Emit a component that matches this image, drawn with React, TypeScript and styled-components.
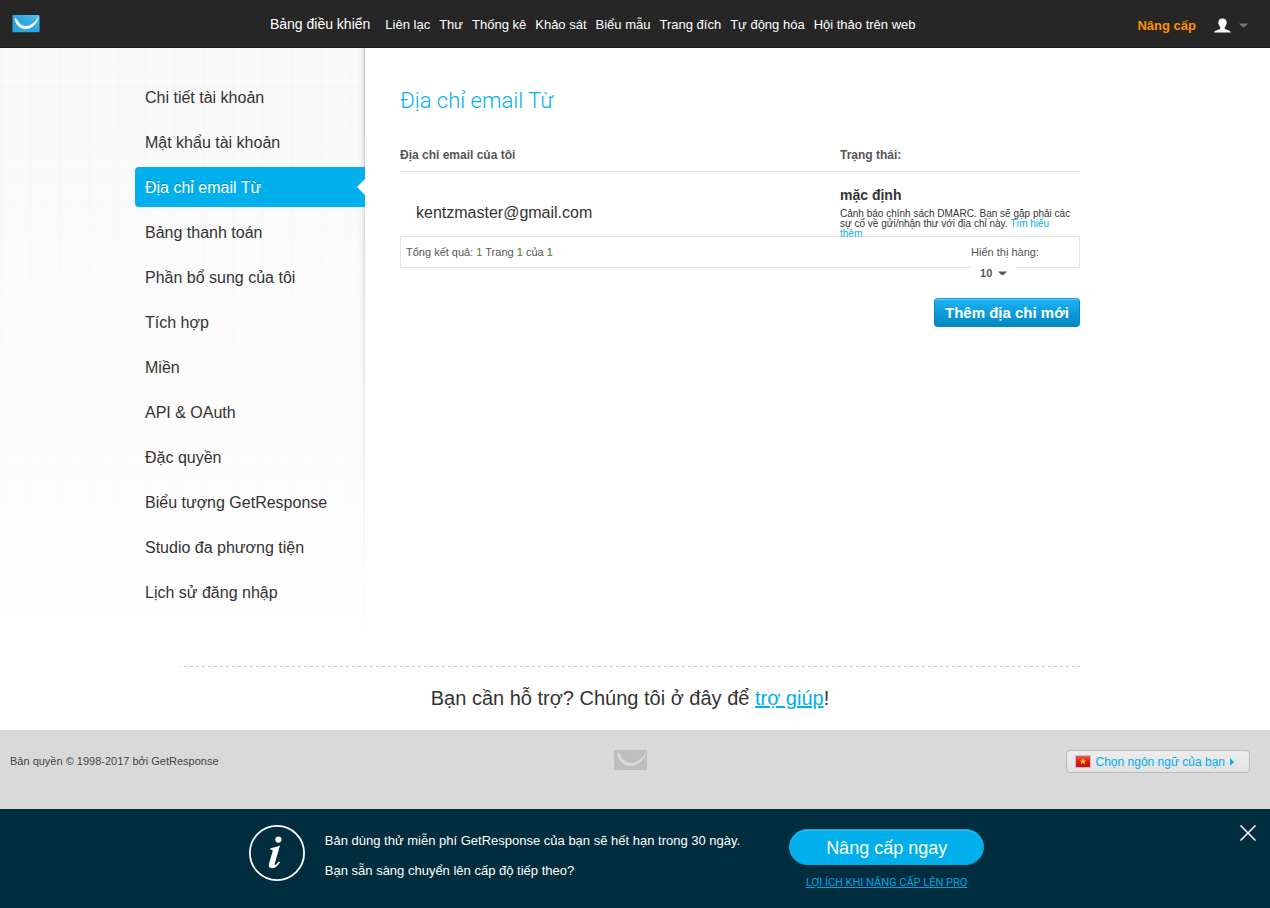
import React from "react";
import styled, { createGlobalStyle } from "styled-components";

const blue = "#00afec";
const sans = `"Liberation Sans", Arial, Helvetica, sans-serif`;
const roboto = `Roboto, "Liberation Sans", sans-serif`;

const GlobalStyle = createGlobalStyle`
  *, *::before, *::after { box-sizing: border-box; }
  body { margin: 0; background: #002e3e; font-family: ${sans}; color: #333; }
  button, select { font-family: inherit; }
  h1, p, ul { margin: 0; padding: 0; }
  ul { list-style: none; }
`;

const Page = styled.div`
  min-height: 100vh;
  display: flex;
  flex-direction: column;
  background: #fff;
`;

const TopBar = styled.header`
  display: flex;
  align-items: center;
  height: 48px;
  padding: 0 22px 0 12px;
  background: #262626;
  border-bottom: 1px solid #1c1c1c;
`;

const LogoLink = styled.a`
  display: block;
  height: 18px;
`;

const MainNav = styled.nav`
  display: flex;
  align-items: baseline;
  gap: 9px;
  margin: 0 auto;
  padding: 2px 0 0 8px;
`;

const NavLink = styled.a<{ $lead?: boolean }>`
  color: #fff;
  font-size: ${(p) => (p.$lead ? 14 : 13)}px;
  line-height: 20px;
  margin-right: ${(p) => (p.$lead ? 6 : 0)}px;
  text-decoration: none;
  white-space: nowrap;
`;

const UpgradeLink = styled.a`
  color: #ff9000;
  font-size: 13px;
  font-weight: bold;
  line-height: 20px;
  padding-top: 4px;
  text-decoration: none;
  white-space: nowrap;
`;

const UserButton = styled.button`
  display: flex;
  align-items: center;
  gap: 8px;
  margin-left: 18px;
  padding: 4px 0 0;
  border: 0;
  background: none;
`;

const Main = styled.main`
  display: grid;
  grid-template-columns: minmax(250px, calc(50% - 270px)) minmax(0, 1fr);
`;

const Sidebar = styled.aside`
  display: flex;
  justify-content: flex-end;
  min-height: 592px;
  padding: 29px 0 20px;
  background:
    linear-gradient(to bottom, rgba(255, 255, 255, 0) 10%, #fff 100%),
    linear-gradient(to left, rgba(0, 0, 0, 0.18), rgba(0, 0, 0, 0.03) 3px, rgba(0, 0, 0, 0) 7px),
    repeating-linear-gradient(90deg, rgba(0, 0, 0, 0.006) 0 3px, transparent 3px 11px, rgba(0, 0, 0, 0.005) 11px 12px, transparent 12px 29px),
    repeating-linear-gradient(0deg, rgba(0, 0, 0, 0.006) 0 2px, transparent 2px 9px, rgba(0, 0, 0, 0.005) 9px 12px, transparent 12px 23px),
    #f9f9f9;
`;

const SideList = styled.ul`
  display: flex;
  flex-direction: column;
  gap: 5px;
  width: 230px;
`;

const SideLink = styled.a<{ $active?: boolean }>`
  display: flex;
  align-items: center;
  justify-content: space-between;
  height: 40px;
  padding-left: 10px;
  border-radius: 4px 0 0 4px;
  background: ${(p) => (p.$active ? blue : "transparent")};
  color: ${(p) => (p.$active ? "#fff" : "#333")};
  text-shadow: ${(p) => (p.$active ? "0 -1px 0 rgba(0, 0, 0, 0.2)" : "none")};
  font-size: 16px;
  line-height: 20px;
  text-decoration: none;
`;

const SideLabel = styled.span`
  padding-top: 2px;
`;

const Content = styled.section`
  width: 715px;
  max-width: 100%;
  padding: 37px 0 0 35px;
`;

const Title = styled.h1`
  color: ${blue};
  font-family: ${roboto};
  font-size: 22px;
  font-weight: 300;
  line-height: 32px;
`;

const EmailTable = styled.table`
  width: 100%;
  margin-top: 22px;
  border-collapse: collapse;
  table-layout: fixed;
`;

const HeadCell = styled.th<{ $width?: string }>`
  width: ${(p) => p.$width ?? "auto"};
  height: 32px;
  padding: 0;
  border-bottom: 1px solid #e2e2e2;
  color: #555;
  font-size: 12px;
  text-align: left;
  vertical-align: top;
  line-height: 32px;
`;

const EmailCell = styled.td`
  height: 64px;
  padding: 18px 0 0 16px;
  font-size: 16px;
`;

const StatusCell = styled.td`
  padding: 13px 0 0;
  vertical-align: top;
`;

const StatusText = styled.div`
  height: 51px;
`;

const StatusName = styled.strong`
  display: block;
  font-size: 14px;
  line-height: 20px;
  margin-bottom: 4px;
`;

const StatusNote = styled.p`
  font-size: 10px;
  line-height: 10px;
`;

const NoteLink = styled.a`
  color: ${blue};
  text-decoration: none;
`;

const Pager = styled.div`
  display: flex;
  justify-content: space-between;
  height: 32px;
  padding: 0 40px 0 5px;
  border: 1px solid #e2e2e2;
  color: #555;
  font-size: 11px;
  line-height: 30px;
`;

const PageNumber = styled.span`
  color: #4a7a2a;
`;

const RowsPicker = styled.div`
  display: flex;
  flex-direction: column;
  align-items: flex-start;
`;

const RowsSelectBox = styled.div`
  display: flex;
  align-items: center;
  height: 20px;
  margin-top: -4px;
  padding: 2px 9px 0;
  background: #fff;
`;

const RowsSelect = styled.select`
  appearance: none;
  width: 18px;
  padding: 0;
  border: 0;
  background: transparent;
  color: #555;
  font-size: 11px;
  font-weight: bold;
  line-height: 16px;
`;

const Actions = styled.div`
  display: flex;
  justify-content: flex-end;
  margin-top: 30px;
`;

const AddButton = styled.button`
  height: 29px;
  padding: 0 10px;
  border: 1px solid #0a86bd;
  border-top-color: #1c9fd8;
  border-radius: 4px;
  background: linear-gradient(to bottom, #1db4f5, #0086c3);
  box-shadow: inset 0 1px 0 rgba(255, 255, 255, 0.3);
  color: #fff;
  font-size: 15px;
  font-weight: bold;
  line-height: 26px;
  white-space: nowrap;
`;

const HelpArea = styled.section`
  display: flex;
  justify-content: center;
  padding: 26px 10px 0 0;
`;

const Help = styled.div`
  width: 900px;
  max-width: 100%;
  height: 64px;
  padding-top: 18px;
  background: repeating-linear-gradient(90deg, #c8c8c8 0 3px, transparent 3px 6px) -2px 0 / 100% 1px repeat-x;
  font-size: 20px;
  line-height: 28px;
  text-align: center;
`;

const HelpLink = styled.a`
  color: ${blue};
`;

const Footer = styled.footer`
  display: grid;
  grid-template-columns: 1fr auto 1fr;
  align-items: start;
  height: 79px;
  padding: 20px 20px 0 10px;
  background:
    repeating-linear-gradient(35deg, rgba(255, 255, 255, 0.03) 0 2px, transparent 2px 5px),
    repeating-linear-gradient(-55deg, rgba(255, 255, 255, 0.03) 0 2px, transparent 2px 5px),
    #d8d8d8;
`;

const Copyright = styled.p`
  font-size: 11px;
  line-height: 22px;
  color: #444;
`;

const LanguageButton = styled.button`
  display: flex;
  align-items: center;
  justify-self: end;
  gap: 5px;
  height: 23px;
  padding: 0 15px 0 8px;
  border: 1px solid #bababa;
  border-radius: 4px;
  background: linear-gradient(to bottom, #ededed, #e2e2e2);
  color: ${blue};
  font-size: 12px;
  white-space: nowrap;
`;

const Banner = styled.section`
  display: flex;
  flex: 1;
  align-items: flex-start;
  min-height: 99px;
  padding: 16px 14px 16px 0;
  background: #002e3e;
  border-bottom: 1px solid #00202c;
`;

const BannerBody = styled.div`
  display: flex;
  align-items: flex-start;
  margin: 0 auto;
  padding-right: 7px;
`;

const BannerText = styled.div`
  margin: 0 49px 0 20px;
  padding-top: 1px;
  color: #fff;
  font-size: 13px;
  line-height: 30px;
`;

const BannerActions = styled.div`
  display: flex;
  flex-direction: column;
  align-items: center;
  gap: 9px;
  padding-top: 4px;
`;

const UpgradeButton = styled.button`
  width: 195px;
  height: 36px;
  padding: 2px 0 0;
  border: 1px solid #13a3dc;
  border-radius: 18px;
  background: ${blue};
  box-shadow: inset 0 1px 0 #33c0f3;
  color: #fff;
  font-size: 18px;
`;

const BenefitsLink = styled.a`
  color: #00a5e8;
  font-family: ${roboto};
  font-size: 11px;
  line-height: 18px;
`;

const CloseButton = styled.button`
  display: flex;
  padding: 0;
  border: 0;
  background: none;
`;

const mainLinks = ["Bảng điều khiển", "Liên lạc", "Thư", "Thống kê", "Khảo sát", "Biểu mẫu", "Trang đích", "Tự động hóa", "Hội thảo trên web"];

const sideLinks = [
  "Chi tiết tài khoản",
  "Mật khẩu tài khoản",
  "Địa chỉ email Từ",
  "Bảng thanh toán",
  "Phần bổ sung của tôi",
  "Tích hợp",
  "Miền",
  "API & OAuth",
  "Đặc quyền",
  "Biểu tượng GetResponse",
  "Studio đa phương tiện",
  "Lịch sử đăng nhập",
];

function EnvelopeLogo() {
  return (
    <svg width="28" height="18" viewBox="0 0 28 18" aria-hidden="true">
      <defs>
        <linearGradient id="envelope" x1="1" y1="0" x2="0" y2="1">
          <stop offset="0" stopColor="#5cc1ee" />
          <stop offset="0.5" stopColor="#2ba6e0" />
          <stop offset="1" stopColor="#2aa5df" />
        </linearGradient>
      </defs>
      <rect x="0.5" width="27" height="17.3" rx="0.8" fill="url(#envelope)" />
      <path d="M2.4 3.8C3.2 2.6 4.2 3 4.8 4.2C7 8.4 10 11 14 11C19.5 11 23.4 7 26.9 1.6C26.9 4.4 22.2 14 14 14.2C8 14.1 4.2 10.4 2.4 3.8Z" fill="#fff" />
    </svg>
  );
}

function FooterEnvelope() {
  return (
    <svg width="33" height="20" viewBox="0 0 33 20" aria-hidden="true">
      <rect width="33" height="20" rx="1" fill="#bebebe" />
      <path d="M3 3.6C3.8 2.6 5 3 5.7 4.2C8.2 9.4 12 12.8 17 12.8C23 12.8 28 8.6 33 1.4C32.4 5 26 16 17 16.1C9.6 16 5 11.4 3 3.6Z" fill="#dadada" />
    </svg>
  );
}

function UserIcon() {
  return (
    <svg width="17" height="15" viewBox="0 0 17 15" aria-hidden="true">
      <path d="M8.5 0.5C11.2 0.5 12.8 2 12.6 4.5C13 4.8 12.8 6.3 12.2 6.6C11.9 8 11.1 8.8 10.7 9.2V10.6C11.7 12 16.4 12.2 16.9 14.6H0.1C0.6 12.2 5.3 12 6.3 10.6V9.2C5.7 8.6 5.1 7.8 4.9 6.6C4.3 6.3 4.1 4.8 4.5 4.5C4.4 2 5.8 0.5 8.5 0.5Z" fill="#fff" />
    </svg>
  );
}

function Caret({ color }: { color: string }) {
  return (
    <svg width="9" height="5" viewBox="0 0 9 5" aria-hidden="true">
      <path d="M0 0.5H9L6 3.5H5.5L4.5 4.5L3.5 3.5H3Z" fill={color} />
    </svg>
  );
}

function Notch() {
  return (
    <svg width="8" height="16" viewBox="0 0 8 16" aria-hidden="true">
      <path d="M8 0V16L0 8Z" fill="#fff" />
    </svg>
  );
}

function VietnamFlag() {
  return (
    <svg width="16" height="13" viewBox="0 0 16 13" aria-hidden="true">
      <defs>
        <linearGradient id="flag" x1="0" y1="0" x2="0" y2="1">
          <stop offset="0" stopColor="#f0574c" />
          <stop offset="0.5" stopColor="#e01a1c" />
          <stop offset="1" stopColor="#c80f14" />
        </linearGradient>
      </defs>
      <rect x="0.5" y="0.5" width="15" height="12" fill="#fff" stroke="#c9c4c4" />
      <rect x="1" y="1" width="14" height="11" fill="url(#flag)" />
      <path d="M8 3L8.9 5.4H11.2L9.4 6.8L10.1 9.2L8 7.8L5.9 9.2L6.6 6.8L4.8 5.4H7.1Z" fill="#ffe600" />
    </svg>
  );
}

function InfoIcon() {
  return (
    <svg width="56" height="56" viewBox="0 0 56 56" aria-hidden="true">
      <circle cx="28" cy="28" r="27.1" fill="none" stroke="#fff" strokeWidth="1.8" />
      <circle cx="29.4" cy="14.6" r="3.1" fill="#fff" />
      <path d="M21.4 23.3C25 22.7 27.8 21.9 31 20.6L25.8 38.4C25.3 40 26.2 40.2 27.2 39.4C28.2 38.5 29 37.5 29.8 36.4L31 37.2C28.9 40.7 26.4 43.2 23.3 43.2C20.3 43.2 19.3 41.4 20 38.8L23.6 26.6C24 25.1 23.6 24.7 21.4 24.7Z" fill="#fff" />
    </svg>
  );
}

export default function App() {
  return (
    <>
      <GlobalStyle />
      <Page>
        <TopBar>
          <LogoLink href="#" aria-label="GetResponse">
            <EnvelopeLogo />
          </LogoLink>
          <MainNav>
            {mainLinks.map((label, i) => (
              <NavLink key={label} href="#" $lead={i === 0}>
                {label}
              </NavLink>
            ))}
          </MainNav>
          <UpgradeLink href="#">Nâng cấp</UpgradeLink>
          <UserButton type="button" aria-label="Tài khoản">
            <UserIcon />
            <Caret color="#777" />
          </UserButton>
        </TopBar>

        <Main>
          <Sidebar>
            <SideList>
              {sideLinks.map((label) => {
                const active = label === "Địa chỉ email Từ";
                return (
                  <li key={label}>
                    <SideLink href="#" $active={active}>
                      <SideLabel>{label}</SideLabel>
                      {active && <Notch />}
                    </SideLink>
                  </li>
                );
              })}
            </SideList>
          </Sidebar>

          <Content>
            <Title>Địa chỉ email Từ</Title>
            <EmailTable>
              <thead>
                <tr>
                  <HeadCell scope="col">Địa chỉ email của tôi</HeadCell>
                  <HeadCell scope="col" $width="240px">Trạng thái:</HeadCell>
                </tr>
              </thead>
              <tbody>
                <tr>
                  <EmailCell>kentzmaster@gmail.com</EmailCell>
                  <StatusCell>
                    <StatusText>
                      <StatusName>mặc định</StatusName>
                      <StatusNote>
                        Cảnh báo chính sách DMARC. Bạn sẽ gặp phải các sự cố về gửi/nhận thư với địa chỉ này.{" "}
                        <NoteLink href="#">
                          Tìm hiểu
                          <br />
                          thêm
                        </NoteLink>
                      </StatusNote>
                    </StatusText>
                  </StatusCell>
                </tr>
              </tbody>
            </EmailTable>
            <Pager>
              <span>
                Tổng kết quả: <PageNumber>1</PageNumber> Trang <PageNumber>1</PageNumber> của <PageNumber>1</PageNumber>
              </span>
              <RowsPicker>
                <label htmlFor="rows">Hiển thị hàng:</label>
                <RowsSelectBox>
                  <RowsSelect id="rows" defaultValue="10">
                    <option>10</option>
                  </RowsSelect>
                  <Caret color="#555" />
                </RowsSelectBox>
              </RowsPicker>
            </Pager>
            <Actions>
              <AddButton type="button">Thêm địa chỉ mới</AddButton>
            </Actions>
          </Content>
        </Main>

        <HelpArea>
          <Help>
            Bạn cần hỗ trợ? Chúng tôi ở đây để <HelpLink href="#">trợ giúp</HelpLink>!
          </Help>
        </HelpArea>

        <Footer>
          <Copyright>Bản quyền © 1998-2017 bởi GetResponse</Copyright>
          <FooterEnvelope />
          <LanguageButton type="button">
            <VietnamFlag />
            Chọn ngôn ngữ của bạn
            <svg width="4" height="8" viewBox="0 0 4 8" aria-hidden="true">
              <path d="M0 0L4 4L0 8Z" fill={blue} />
            </svg>
          </LanguageButton>
        </Footer>

        <Banner>
          <BannerBody>
            <InfoIcon />
            <BannerText>
              <p>Bản dùng thử miễn phí GetResponse của bạn sẽ hết hạn trong 30 ngày.</p>
              <p>Bạn sẵn sàng chuyển lên cấp độ tiếp theo?</p>
            </BannerText>
            <BannerActions>
              <UpgradeButton type="button">Nâng cấp ngay</UpgradeButton>
              <BenefitsLink href="#">LỢI ÍCH KHI NÂNG CẤP LÊN PRO</BenefitsLink>
            </BannerActions>
          </BannerBody>
          <CloseButton type="button" aria-label="Đóng">
            <svg width="16" height="16" viewBox="0 0 16 16" aria-hidden="true">
              <path d="M0.5 0.5L15.5 15.5M15.5 0.5L0.5 15.5" stroke="#fff" strokeWidth="1.5" />
            </svg>
          </CloseButton>
        </Banner>
      </Page>
    </>
  );
}
